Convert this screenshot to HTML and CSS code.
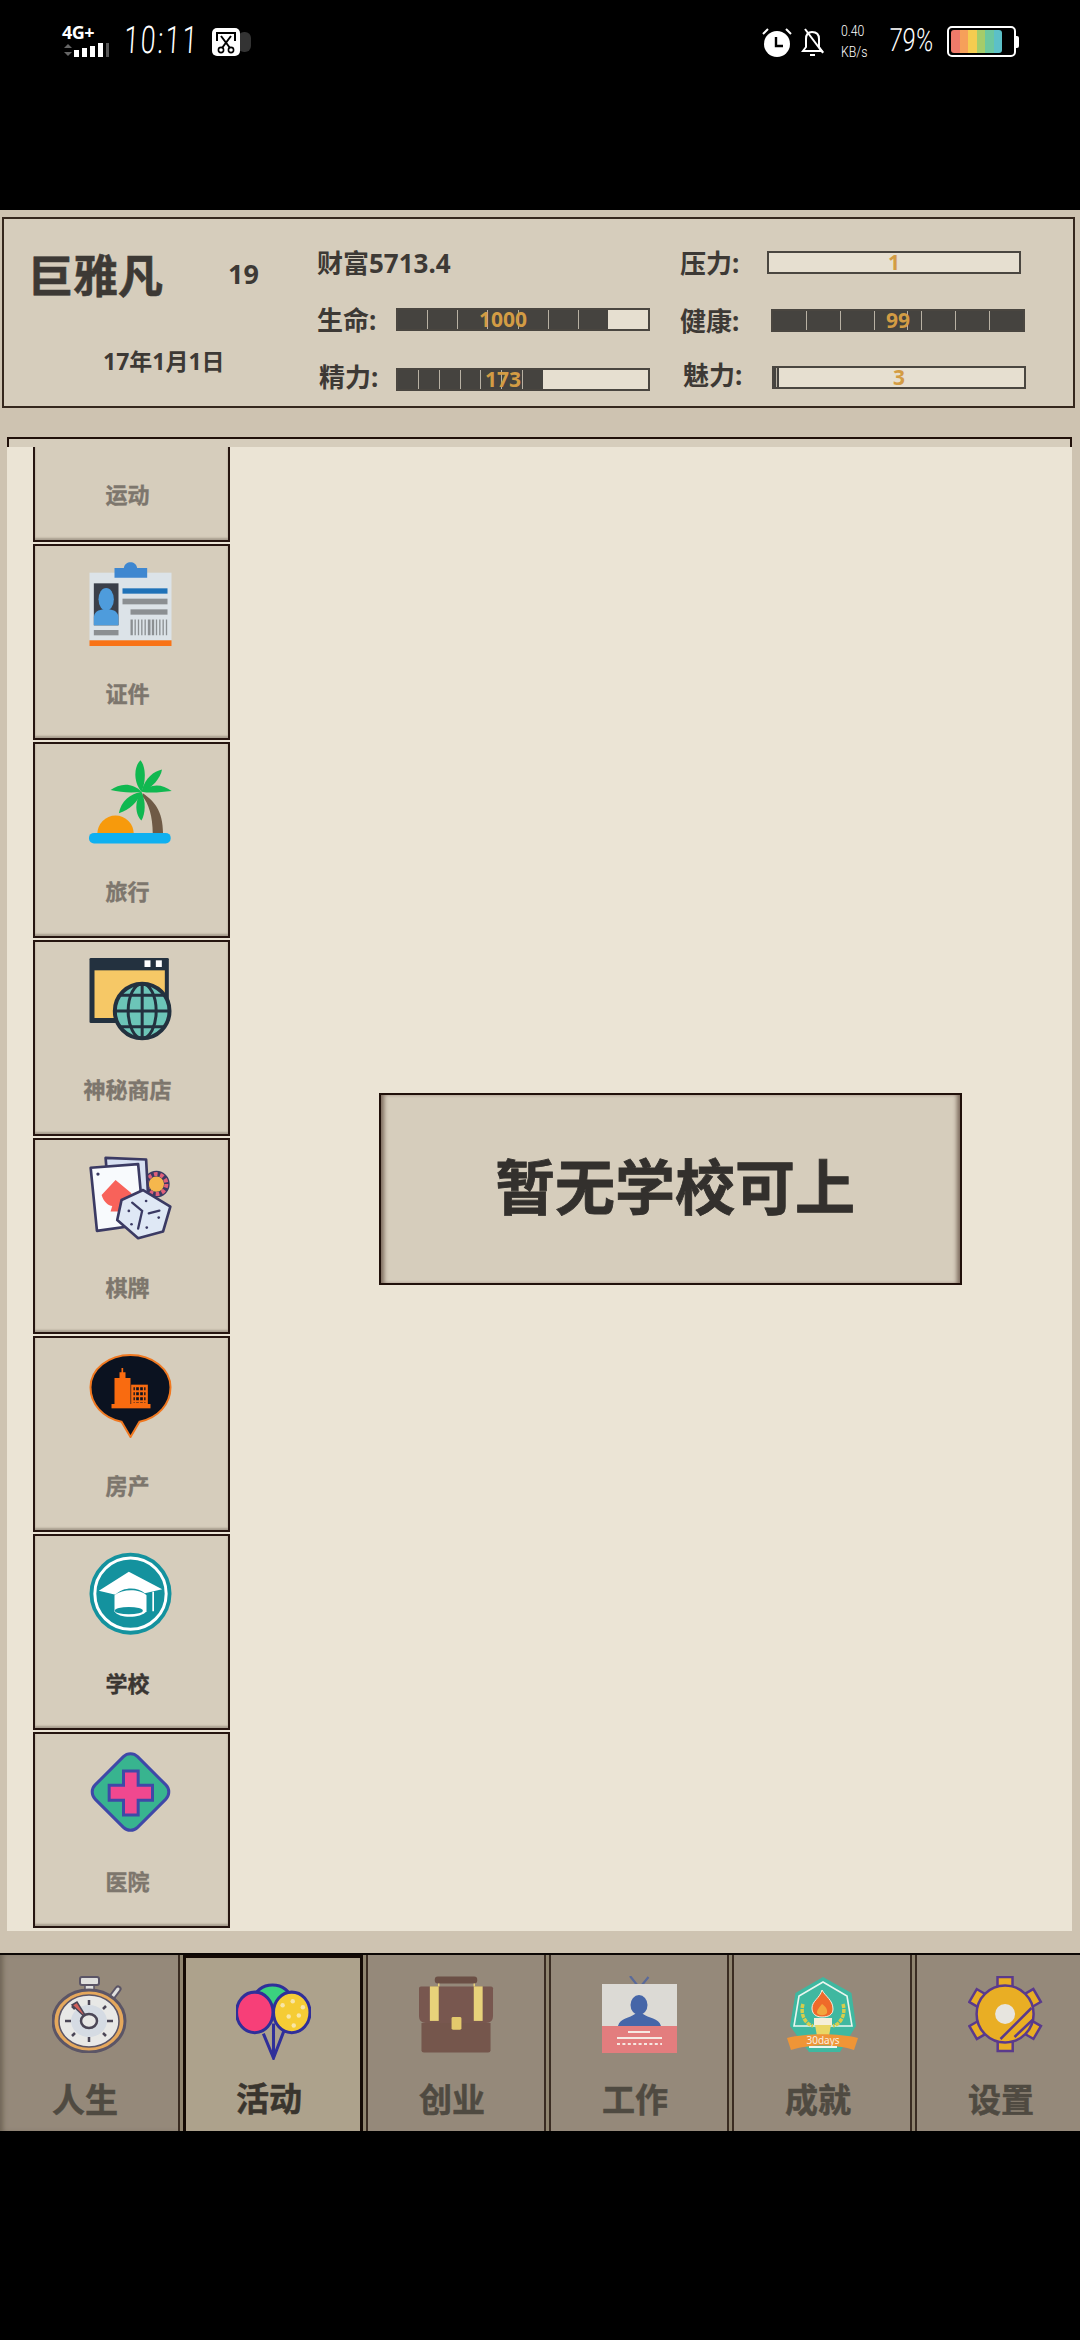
FILE: index.html
```html
<!DOCTYPE html>
<html lang="zh">
<head>
	<meta charset="UTF-8" />
	<meta name="viewport" content="width=device-width, initial-scale=1.0" />
	<title>人生</title>
	<link rel="stylesheet" href="styles.css">
</head>
<body>

	<!-- phone status bar -->
	<div class="status-bar">
		<div class="status-group">
			<div class="network">
				<span class="net-type">4G+</span>
				<svg class="net-bars" width="48" height="14" viewBox="0 0 48 14">
					<path d="M2 5 L6 1 L10 5z M2 9 L6 13 L10 9z" fill="#666" />
					<rect x="12" y="7" width="5" height="7" fill="#fff" />
					<rect x="20" y="5" width="5" height="9" fill="#fff" />
					<rect x="28" y="3" width="5" height="11" fill="#fff" />
					<rect x="36" y="0" width="5" height="14" fill="#fff" />
					<rect x="44" y="0" width="3" height="14" fill="#555" />
				</svg>
			</div>
			<span class="clock">10:11</span>
			<svg class="cut-app" width="39" height="28" viewBox="0 0 39 28">
				<rect x="26" y="4" width="13" height="20" rx="6" fill="#333" />
				<rect x="0" y="0" width="28" height="28" rx="5" fill="#fff" />
				<path d="M5 13 V5 H23 V13" fill="none" stroke="#000" stroke-width="2" />
				<path d="M9 8 L18 20 M19 8 L10 20" stroke="#000" stroke-width="2" />
				<circle cx="9" cy="22" r="2.6" fill="none" stroke="#000" stroke-width="1.6" />
				<circle cx="19" cy="22" r="2.6" fill="none" stroke="#000" stroke-width="1.6" />
			</svg>
		</div>
		<div class="status-group status-right">
			<svg class="alarm" width="30" height="29" viewBox="0 0 30 29">
				<circle cx="15" cy="16" r="13" fill="#fff" />
				<path d="M1 6 L6 1 M29 6 L24 1" stroke="#fff" stroke-width="2" />
				<path d="M14 9 V18 H21" fill="none" stroke="#000" stroke-width="2.4" />
			</svg>
			<svg class="bell" width="24" height="29" viewBox="0 0 24 29">
				<path d="M2 23 H21 L18 19 V11 C18 6 15 4 11 4 C7 4 5 7 5 11 V19z" fill="none" stroke="#fff" stroke-width="2" />
				<path d="M9 27 H14" stroke="#fff" stroke-width="2" />
				<path d="M4 1 L22 25" stroke="#fff" stroke-width="2" />
			</svg>
			<div class="net-speed">
				<span>0.40</span>
				<span>KB/s</span>
			</div>
			<span class="battery-text">79%</span>
			<div class="battery">
				<div class="battery-level">
					<i class="cell-a"></i><i class="cell-b"></i><i class="cell-c"></i><i class="cell-d"></i><i class="cell-e"></i><i class="cell-f"></i>
				</div>
			</div>
			<span class="battery-nub"></span>
		</div>
	</div>

	<div class="app">

		<div class="top-card">
			<div class="profile">
				<div class="name-row">
					<span class="name">巨雅凡</span>
					<span class="age">19</span>
				</div>
				<div class="date">17年1月1日</div>
			</div>

			<div class="stat-col">
				<div class="wealth">财富5713.4</div>
				<div class="stat stat-life">
					<span class="stat-label">生命:</span>
					<div class="bar">
						<div class="fill" style="width: 84%">
							<i></i><i></i><i></i><i></i><i></i><i></i><i></i>
						</div>
						<span class="bar-value value-left">1000</span>
					</div>
				</div>
				<div class="stat stat-energy">
					<span class="stat-label label-raised">精力:</span>
					<div class="bar">
						<div class="fill" style="width: 58%">
							<i></i><i></i><i></i><i></i><i></i><i></i><i></i>
						</div>
						<span class="bar-value value-left">173</span>
					</div>
				</div>
			</div>

			<div class="stat-col stat-col-right">
				<div class="stat stat-pressure">
					<span class="stat-label">压力:</span>
					<div class="bar">
						<span class="bar-value">1</span>
					</div>
				</div>
				<div class="stat stat-health">
					<span class="stat-label">健康:</span>
					<div class="bar">
						<div class="fill" style="width: 100%">
							<i></i><i></i><i></i><i></i><i class="short"></i><i></i><i></i><i></i>
						</div>
						<span class="bar-value">99</span>
					</div>
				</div>
				<div class="stat stat-charm">
					<span class="stat-label label-raised">魅力:</span>
					<div class="bar">
						<div class="fill" style="width: 2%">
							<i></i><i></i>
						</div>
						<span class="bar-value">3</span>
					</div>
				</div>
			</div>
		</div>

		<div class="panel-frame"></div>
		<div class="panel">
			<div class="side-list">

				<div class="side-item side-item-cut">
					<span class="side-label">运动</span>
				</div>

				<div class="side-item">
					<svg class="side-icon" viewBox="0 0 246 252">
						<rect x="0" y="32" width="246" height="203" fill="#dce3e8" />
						<path d="M75 18 H103 C106 -5 140 -5 143 18 H173 V47 H75z" fill="#3f87d0" />
						<rect x="13" y="64" width="74" height="126" fill="#3a3f4a" />
						<ellipse cx="50" cy="112" rx="23" ry="34" fill="#4e9cdc" />
						<path d="M13 190 V165 C15 145 35 142 50 142 C65 142 85 145 87 165 V190z" fill="#4e9cdc" />
						<rect x="99" y="79" width="135" height="16" fill="#1f72b8" />
						<rect x="99" y="110" width="135" height="17" fill="#8b8f92" />
						<rect x="123" y="142" width="111" height="16" fill="#8b8f92" />
						<line x1="123" y1="196" x2="234" y2="196" stroke="#8b8f92" stroke-width="47" stroke-dasharray="7 5 4 6 4 6 4 6 4 6 8 4" />
						<rect x="13" y="204" width="74" height="16" fill="#8b8f92" />
						<rect x="0" y="235" width="246" height="17" fill="#f97316" />
					</svg>
					<span class="side-label">证件</span>
				</div>

				<div class="side-item">
					<svg class="side-icon" viewBox="0 0 250 252">
						<path d="M25 222 a55 55 0 0 1 110 0z" fill="#f79a0c" />
						<path d="M162 100 C192 120 224 150 223 222 H192 C192 170 180 130 160 108z" fill="#6f5a46" />
						<rect x="0" y="219" width="246" height="32" rx="15" fill="#0fb0f0" />
						<g fill="#10b850">
							<path d="M158 95 C130 60 138 15 155 0 C172 20 172 65 158 95z" />
							<path d="M158 95 C170 50 195 35 220 28 C215 55 190 85 158 95z" />
							<path d="M158 95 C185 70 220 70 249 93 C215 97 185 100 158 95z" />
							<path d="M158 95 C130 65 90 70 65 90 C95 97 130 100 158 95z" />
							<path d="M158 95 C125 100 95 125 90 160 C120 150 150 125 158 95z" />
							<path d="M158 95 C135 125 140 165 158 182 C170 160 172 125 158 95z" />
						</g>
					</svg>
					<span class="side-label">旅行</span>
				</div>

				<div class="side-item">
					<svg class="side-icon" viewBox="0 0 246 252">
						<rect x="0" y="0" width="238" height="195" rx="4" fill="#23313f" />
						<rect x="15" y="37" width="211" height="143" fill="#f6c866" />
						<rect x="165" y="7" width="18" height="20" fill="#fff" />
						<rect x="199" y="7" width="18" height="20" fill="#fff" />
						<circle cx="158" cy="159" r="82" fill="#6cc5b8" stroke="#23313f" stroke-width="12" />
						<g fill="none" stroke="#23313f" stroke-width="9">
							<ellipse cx="158" cy="159" rx="42" ry="82" />
							<path d="M158 77 V241 M76 159 H240 M92 112 H224 M92 206 H224" />
						</g>
					</svg>
					<span class="side-label">神秘商店</span>
				</div>

				<div class="side-item">
					<svg class="side-icon" viewBox="0 0 250 252">
						<circle cx="203" cy="84" r="40" fill="#3b3a63" />
						<circle cx="203" cy="84" r="30" fill="none" stroke="#e0607a" stroke-width="12" stroke-dasharray="11 8" />
						<circle cx="203" cy="84" r="23" fill="#f5b74d" />
						<g stroke="#3b3a63" stroke-width="8" stroke-linejoin="round">
							<path d="M50 5 L172 10 L178 120 L60 130z" fill="#d7e0f2" />
							<path d="M5 35 L148 24 L165 205 L24 225z" fill="#f8fafd" />
						</g>
						<circle cx="27" cy="54" r="5" fill="#3b3a63" />
						<path d="M80 72 L38 117 C45 140 60 150 70 150 L65 167 H100 L128 112z" fill="#f8625a" />
						<path d="M163 102 L245 152 L223 227 L148 247 L85 192 L98 132z" fill="#dfe8f5" stroke="#3b3a63" stroke-width="8" stroke-linejoin="round" />
						<path d="M130 140 L160 165 L148 218 M180 172 L212 164" fill="none" stroke="#3b3a63" stroke-width="7" stroke-linecap="round" />
						<g fill="#3b3a63">
							<circle cx="172" cy="135" r="4" />
							<circle cx="120" cy="165" r="4" />
							<circle cx="128" cy="205" r="4" />
							<circle cx="174" cy="215" r="4" />
							<circle cx="210" cy="185" r="4" />
						</g>
					</svg>
					<span class="side-label">棋牌</span>
				</div>

				<div class="side-item">
					<svg class="side-icon" viewBox="0 0 246 252">
						<path d="M123 249 L96 203 C40 192 3 150 3 100 C3 45 58 3 123 3 C188 3 243 45 243 100 C243 150 206 192 150 203z" fill="#0b1220" stroke="#f07820" stroke-width="6" />
						<path d="M75 150 V72 H90 V55 H96 V42 H101 V55 H108 V72 H123 V150z" fill="#f96b10" />
						<rect x="125" y="92" width="50" height="58" fill="#f96b10" />
						<rect x="66" y="150" width="117" height="13" fill="#f96b10" />
						<line x1="150" y1="100" x2="150" y2="146" stroke="#0b1220" stroke-width="36" stroke-dasharray="9 6" />
						<path d="M138 95 V150 M150 95 V150 M162 95 V150" stroke="#f96b10" stroke-width="4" />
					</svg>
					<span class="side-label">房产</span>
				</div>

				<div class="side-item side-item-active">
					<svg class="side-icon" viewBox="0 0 246 252">
						<circle cx="123" cy="125" r="123" fill="#14929e" />
						<circle cx="123" cy="125" r="107" fill="none" stroke="#fff" stroke-width="9" />
						<path d="M75 130 V178 C85 200 155 200 171 178 V130 C150 110 100 110 75 130z" fill="#fff" />
						<ellipse cx="118" cy="176" rx="42" ry="11" fill="#14929e" />
						<path d="M118 59 L218 112 L166 124 C145 104 100 104 78 128 L28 116z" fill="#fff" />
						<path d="M191 119 V178" stroke="#fff" stroke-width="5" />
					</svg>
					<span class="side-label">学校</span>
				</div>

				<div class="side-item">
					<svg class="side-icon" viewBox="0 0 246 252">
						<rect x="33" y="36" width="180" height="180" rx="30" transform="rotate(45 123 126)" fill="#38b48f" stroke="#3f48a8" stroke-width="9" />
						<path d="M102 63 H146 V106 H189 V151 H146 V195 H102 V151 H59 V106 H102z" fill="#f0488f" stroke="#3f48a8" stroke-width="9" />
					</svg>
					<span class="side-label">医院</span>
				</div>

			</div>

			<div class="panel-main">
				<div class="notice">暂无学校可上</div>
			</div>
		</div>

		<div class="tabs">

			<div class="tab">
				<svg class="tab-icon" viewBox="0 0 75 77">
					<rect x="33" y="7" width="9" height="8" fill="#e0e0de" stroke="#5b5566" stroke-width="1.5" />
					<rect x="28" y="1" width="19" height="8" rx="2" fill="#e0e0de" stroke="#5b5566" stroke-width="2" />
					<path d="M60 21 L66 13" stroke="#5b5566" stroke-width="7" stroke-linecap="round" />
					<path d="M60 21 L66 13" stroke="#e0e0de" stroke-width="3" stroke-linecap="round" />
					<ellipse cx="37" cy="45" rx="36" ry="31" fill="#e5a85c" stroke="#5b5566" stroke-width="3" />
					<ellipse cx="37" cy="45" rx="30" ry="26" fill="#e8e8e6" stroke="#5b5566" stroke-width="1.5" />
					<ellipse cx="37" cy="45" rx="18" ry="16" fill="#d5dbe3" />
					<path d="M37 24 V29 M37 61 V66 M13 45 H19 M55 45 H61 M20 30 L23 33 M54 30 L51 33 M20 60 L23 57 M54 60 L51 57" stroke="#4b4656" stroke-width="2.5" />
					<path d="M36 44 L20 29 L25 26z" fill="#d3605a" stroke="#4b4656" stroke-width="1.5" />
					<ellipse cx="37" cy="45" rx="8" ry="7" fill="#e8e8e6" stroke="#4b4656" stroke-width="2.5" />
				</svg>
				<span class="tab-label">人生</span>
			</div>

			<div class="tab tab-active">
				<svg class="tab-icon" viewBox="0 0 74 76">
					<g fill="none" stroke="#2f2f9a" stroke-width="3">
						<path d="M27 50 L37 74 L47 48 M37 40 V74" />
						<ellipse cx="36" cy="16" rx="18" ry="14" fill="#3bd17f" />
						<ellipse cx="18.5" cy="29" rx="18" ry="20" fill="#f73f78" />
						<ellipse cx="55" cy="29" rx="18" ry="20" fill="#f5cc35" />
					</g>
					<g fill="#f8e6a8">
						<circle cx="46" cy="22" r="2.2" />
						<circle cx="56" cy="18" r="2.2" />
						<circle cx="66" cy="24" r="2.2" />
						<circle cx="52" cy="33" r="2.2" />
						<circle cx="62" cy="32" r="2.2" />
						<circle cx="57" cy="42" r="2.2" />
					</g>
				</svg>
				<span class="tab-label">活动</span>
			</div>

			<div class="tab">
				<svg class="tab-icon" viewBox="0 0 76 77">
					<rect x="16" y="0" width="43" height="7" rx="3" fill="#6b4f45" />
					<path d="M20 7 V11 M56 7 V11" stroke="#e8d27a" stroke-width="1.5" />
					<path d="M2 10 H73 Q75 10 75 12 V40 Q75 47 68 47 H7 Q0 47 0 40 V12 Q0 10 2 10z" fill="#78574f" />
					<path d="M2.5 47 H72.5 V75 Q72.5 77 70 77 H5 Q2.5 77 2.5 75z" fill="#75564c" />
					<rect x="11" y="10" width="9" height="35" fill="#e8d27a" />
					<rect x="55.5" y="10" width="9" height="35" fill="#e8d27a" />
					<rect x="33" y="41" width="10" height="13" rx="1.5" fill="#e3c96c" />
				</svg>
				<span class="tab-label">创业</span>
			</div>

			<div class="tab">
				<svg class="tab-icon" viewBox="0 0 75 77">
					<path d="M28 0 L37.5 12 L46.5 1" fill="none" stroke="#5a6a9a" stroke-width="2.2" />
					<rect x="0" y="8" width="75" height="42" fill="#dcdad5" />
					<rect x="0" y="50" width="75" height="27" fill="#e37d7e" />
					<ellipse cx="37" cy="29" rx="8.5" ry="10" fill="#4666a8" />
					<path d="M16 50 C18 42 28 42 33 38 H41 C46 42 57 42 59 50z" fill="#4666a8" />
					<path d="M26 56 H48 M15 62 H60" stroke="#f6e8e2" stroke-width="2" />
					<path d="M15 68 H60" stroke="#f6e8e2" stroke-width="2" stroke-dasharray="3 2.4" />
				</svg>
				<span class="tab-label">工作</span>
			</div>

			<div class="tab">
				<svg class="tab-icon tab-icon-badge" viewBox="0 0 71 77">
					<path d="M36 1 L64.5 17 L69 50 L53 76 H22 L3 50 L8.5 17z" fill="#3fb8a0" />
					<path d="M36 6 L60 20 L65 50 H7 L12 20z" fill="none" stroke="#eaf6ef" stroke-width="1.6" />
					<path d="M16 28 C13 38 18 48 26 50 M56 28 C59 38 54 48 46 50" fill="none" stroke="#d8cd4a" stroke-width="3.5" stroke-dasharray="4 1" />
					<path d="M35 14 C38 20 46 24 46 33 C46 39 41 41 35 41 C29 41 25 38 25 32 C25 25 33 22 35 14z" fill="#ef6a2a" stroke="#f5efe0" stroke-width="1" />
					<path d="M35 28 C38 30 41 33 40 37 C38 40 32 40 30 37 C30 33 33 31 35 28z" fill="#f3a63c" />
					<rect x="27" y="42" width="18" height="7" fill="#f5efd8" />
					<path d="M28 49 H44 L42 60 H30z" fill="#e9d765" />
					<path d="M0 62 C20 57 51 57 71 62 L67 74 C50 68 22 68 4 74z" fill="#ef9537" />
					<text class="badge-text" x="36" y="68" text-anchor="middle">30days</text>
					<path d="M22 71 H50" stroke="#eaf6ef" stroke-width="2" />
				</svg>
				<span class="tab-label">成就</span>
			</div>

			<div class="tab">
				<svg class="tab-icon" viewBox="0 0 74 77">
					<g fill="#e9ae24" stroke="#5a3a8c" stroke-width="2.5">
						<rect x="29" y="1" width="15" height="12" />
						<rect x="29" y="1" width="15" height="12" transform="rotate(60 36.6 38)" />
						<rect x="29" y="1" width="15" height="12" transform="rotate(120 36.6 38)" />
						<rect x="29" y="1" width="15" height="12" transform="rotate(180 36.6 38)" />
						<rect x="29" y="1" width="15" height="12" transform="rotate(240 36.6 38)" />
						<rect x="29" y="1" width="15" height="12" transform="rotate(300 36.6 38)" />
						<circle cx="36.6" cy="38" r="28.5" />
					</g>
					<circle cx="36.6" cy="38" r="10" fill="#e7e5df" />
					<path d="M32 63 L63 32 M46 61 L64 44" stroke="#5a3a8c" stroke-width="2.5" />
				</svg>
				<span class="tab-label">设置</span>
			</div>

		</div>
	</div>

</body>
</html>
```

FILE: styles.css
```css
* {
	box-sizing: border-box;
}

body {
	margin: 0;
	width: 1080px;
	height: 2340px;
	overflow: hidden;
	background-color: #000;
	font-family: "Noto Sans", "Noto Sans CJK SC", sans-serif;
}

/* Status bar */
.status-bar {
	height: 210px;
	padding: 25px 61px 0 62px;
	display: flex;
	justify-content: space-between;
	align-items: flex-start;
	color: #fff;
}

.status-group {
	display: flex;
	align-items: flex-start;
}

.network {
	width: 50px;
	display: flex;
	flex-direction: column;
}

.net-type {
	font-size: 18px;
	font-weight: 700;
	line-height: 15px;
	letter-spacing: -0.5px;
}

.net-bars {
	margin-top: 3px;
}

.clock {
	width: 74px;
	margin-left: 12px;
	font-family: "Roboto", sans-serif;
	font-size: 38px;
	font-weight: 300;
	line-height: 30px;
	letter-spacing: 3px;
	transform: scaleX(0.7) skewX(-5deg);
	transform-origin: left center;
}

.cut-app {
	margin: 3px 0 0 14px;
}

.alarm {
	margin-top: 3px;
}

.bell {
	margin: 3px 16px 0 9px;
}

.net-speed {
	width: 28px;
	display: flex;
	flex-direction: column;
	gap: 8px;
	font-family: "Roboto", sans-serif;
	font-size: 15px;
	font-weight: 300;
	line-height: 13px;
	white-space: nowrap;
	transform: scaleX(0.82);
	transform-origin: left top;
}

.battery-text {
	width: 44px;
	margin: 0 14px 0 20px;
	font-family: "Roboto", sans-serif;
	font-size: 32px;
	font-weight: 300;
	line-height: 30px;
	white-space: nowrap;
	transform: scaleX(0.75) skewX(-5deg);
	transform-origin: left center;
}

.battery {
	width: 69px;
	height: 31px;
	margin-top: 1px;
	padding: 2px;
	border: 2px solid #fff;
	border-radius: 5px;
}

.battery-level {
	width: 51px;
	height: 100%;
	display: flex;
	border-radius: 3px;
	overflow: hidden;
}

.battery-level i {
	flex: 1;
}

.cell-a { background-color: #ef7a6a; }
.cell-b { background-color: #f6a05a; }
.cell-c { background-color: #f5cc50; }
.cell-d { background-color: #a5cc6a; }
.cell-e { background-color: #6cc7a0; }
.cell-f { background-color: #5cc0c8; }

.battery-nub {
	width: 3px;
	height: 12px;
	margin-top: 11px;
	background-color: #fff;
	border-radius: 0 2px 2px 0;
}

/* Game area */
.app {
	height: 1921px;
	padding-top: 7px;
	background-color: #cec3b1;
	overflow: hidden;
}

.top-card {
	height: 191px;
	margin: 0 5px 0 2px;
	display: flex;
	background-color: #d6cdbc;
	border: 2px solid #35271d;
	color: #3d3935;
	font-weight: 700;
}

.profile {
	width: 313px;
	padding-top: 27px;
}

.name-row {
	display: flex;
	align-items: center;
	padding-left: 24px;
}

.name {
	font-size: 45px;
	line-height: 60px;
	-webkit-text-stroke: 0.6px #3d3935;
}

.age {
	margin: -6px 0 0 65px;
	font-size: 27px;
}

.date {
	margin: 40px 0 0 99px;
	font-size: 23px;
	line-height: 30px;
}

.stat-col {
	width: 363px;
	padding-top: 29px;
}

.stat-col-right {
	padding-top: 32px;
}

.wealth {
	font-size: 26px;
	line-height: 30px;
}

.stat {
	height: 23px;
	display: flex;
	align-items: center;
}

.stat-label {
	width: 79px;
	font-size: 26px;
	line-height: 26px;
	white-space: nowrap;
}

.label-raised {
	padding-bottom: 5px;
}

.stat-life { margin-top: 30px; }
.stat-energy { margin-top: 37px; }
.stat-energy .stat-label { padding-left: 2px; }

.stat-pressure .stat-label { width: 87px; }
.stat-health { margin-top: 35px; }
.stat-health .stat-label { width: 91px; }
.stat-charm { margin-top: 34px; }
.stat-charm .stat-label { width: 92px; padding-left: 3px; }

.bar {
	position: relative;
	width: 254px;
	height: 23px;
	background-color: #e6dfd0;
	border: 2px solid #4a4640;
}

.fill {
	height: 100%;
	display: flex;
	background-color: #45433f;
}

.fill i {
	flex: 1;
	border-right: 1px solid #b8b1a3;
}

.fill i:last-child {
	border-right: none;
}

.fill i.short {
	flex: 0 0 14px;
}

.bar-value {
	position: absolute;
	top: 0;
	left: 0;
	right: 0;
	text-align: center;
	font-size: 21px;
	line-height: 19px;
	color: #d39c44;
}

.value-left {
	padding-right: 40px;
}

.panel-frame {
	height: 10px;
	margin: 29px 8px 0 7px;
	background-color: #d6cdbc;
	border: 2px solid #20100a;
	border-bottom: none;
}

.panel {
	height: 1484px;
	margin: 0 8px 0 7px;
	display: flex;
	background-color: #ebe4d5;
}

/* Left menu */
.side-list {
	width: 197px;
	margin-left: 26px;
	display: flex;
	flex-direction: column;
	gap: 2px;
}

.side-item {
	height: 196px;
	flex-shrink: 0;
	display: flex;
	flex-direction: column;
	align-items: center;
	background-color: #d6cdbc;
	border: 2px solid #261510;
	box-shadow: inset 0 -2px 2px #a89e8f;
	font-weight: 700;
	color: #7d766d;
}

.side-item-cut {
	height: 95px;
	border-top: none;
	justify-content: flex-end;
	padding-bottom: 31px;
}

.side-item-active {
	color: #3a3632;
}

.side-icon {
	width: 83px;
	height: 84px;
	margin: 16px 3px 0 0;
}

.side-label {
	margin: 32px 8px 0 0;
	font-size: 22px;
	line-height: 30px;
	-webkit-text-stroke: 0.4px currentColor;
}

.side-item-cut .side-label {
	margin-top: 0;
}

/* Right side */
.panel-main {
	flex: 1;
	padding-left: 38px;
	display: flex;
	justify-content: center;
	align-items: center;
}

.notice {
	width: 583px;
	height: 192px;
	padding: 0 0 11px 10px;
	display: flex;
	justify-content: center;
	align-items: center;
	background-color: #d6cdbc;
	border: 2px solid #20100a;
	box-shadow: inset 5px 0 4px -2px #7d6b5e, inset -5px 0 4px -2px #7d6b5e;
	font-size: 60px;
	font-weight: 700;
	color: #33302d;
	-webkit-text-stroke: 0.8px #33302d;
}

/* Bottom tabs */
.tabs {
	height: 178px;
	margin-top: 22px;
	display: flex;
	gap: 3px;
	background-color: #8f846f;
	border-top: 2px solid #0c0705;
	overflow: hidden;
}

.tab {
	flex: 0 0 180px;
	display: flex;
	flex-direction: column;
	align-items: center;
	background-color: #95897a;
	border-left: 2px solid #3a2c22;
	border-right: 2px solid #3a2c22;
	font-weight: 700;
	color: #4f4a41;
}

.tab:first-child {
	border-left: none;
	box-shadow: inset 5px 0 5px -2px #6f6556;
}

.tab-active {
	background-color: #ada28c;
	border: 3px solid #140a05;
	border-bottom: none;
	color: #39352e;
}

.tab-icon {
	width: 75px;
	height: 77px;
	margin-top: 21px;
}

.tab-icon-badge {
	width: 71px;
}

.tab-active .tab-icon {
	margin-top: 25px;
}

.tab-label {
	margin: 27px 8px 0 0;
	font-size: 33px;
	line-height: 40px;
	-webkit-text-stroke: 0.5px currentColor;
}

.tab-active .tab-label {
	margin-top: 19px;
}

.badge-text {
	font-family: "Noto Sans", sans-serif;
	font-size: 10px;
	font-weight: 400;
	fill: #f8efe0;
}
```
